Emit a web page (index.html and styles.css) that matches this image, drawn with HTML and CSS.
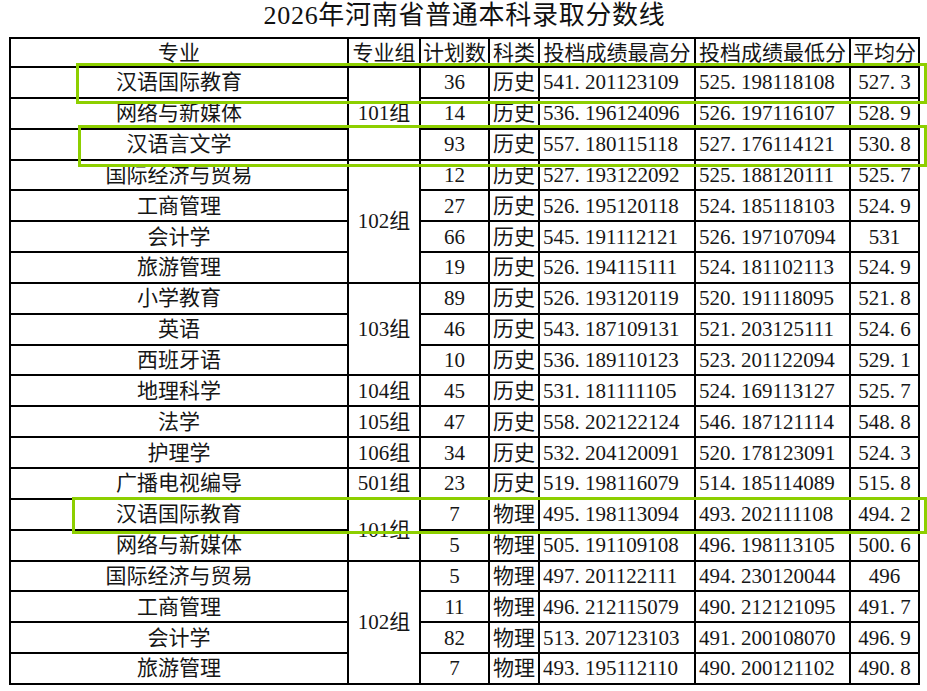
FILE: index.html
```html
<!DOCTYPE html>
<html lang="zh-CN">
<head>
<meta charset="utf-8">
<title>2026年河南省普通本科录取分数线</title>
<link rel="stylesheet" href="styles.css">
</head>
<body>
<div class="page">
  <h1 class="title">2026年河南省普通本科录取分数线</h1>
  <table class="scores">
    <colgroup>
      <col class="c-major">
      <col class="c-group">
      <col class="c-plan">
      <col class="c-type">
      <col class="c-high">
      <col class="c-low">
      <col class="c-avg">
    </colgroup>
    <thead>
      <tr class="head">
        <th>专业</th><th>专业组</th><th>计划数</th><th>科类</th><th>投档成绩最高分</th><th>投档成绩最低分</th><th>平均分</th>
      </tr>
    </thead>
    <tbody>
      <tr><td>汉语国际教育</td><td class="grp" rowspan="3">101组</td><td>36</td><td>历史</td><td class="sc">541<i>.</i>201123109</td><td class="sc">525<i>.</i>198118108</td><td>527<i>.</i>3</td></tr>
      <tr><td>网络与新媒体</td><td>14</td><td>历史</td><td class="sc">536<i>.</i>196124096</td><td class="sc">526<i>.</i>197116107</td><td>528<i>.</i>9</td></tr>
      <tr><td>汉语言文学</td><td>93</td><td>历史</td><td class="sc">557<i>.</i>180115118</td><td class="sc">527<i>.</i>176114121</td><td>530<i>.</i>8</td></tr>
      <tr><td>国际经济与贸易</td><td class="grp" rowspan="4">102组</td><td>12</td><td>历史</td><td class="sc">527<i>.</i>193122092</td><td class="sc">525<i>.</i>188120111</td><td>525<i>.</i>7</td></tr>
      <tr><td>工商管理</td><td>27</td><td>历史</td><td class="sc">526<i>.</i>195120118</td><td class="sc">524<i>.</i>185118103</td><td>524<i>.</i>9</td></tr>
      <tr><td>会计学</td><td>66</td><td>历史</td><td class="sc">545<i>.</i>191112121</td><td class="sc">526<i>.</i>197107094</td><td>531</td></tr>
      <tr><td>旅游管理</td><td>19</td><td>历史</td><td class="sc">526<i>.</i>194115111</td><td class="sc">524<i>.</i>181102113</td><td>524<i>.</i>9</td></tr>
      <tr><td>小学教育</td><td class="grp" rowspan="3">103组</td><td>89</td><td>历史</td><td class="sc">526<i>.</i>193120119</td><td class="sc">520<i>.</i>191118095</td><td>521<i>.</i>8</td></tr>
      <tr><td>英语</td><td>46</td><td>历史</td><td class="sc">543<i>.</i>187109131</td><td class="sc">521<i>.</i>203125111</td><td>524<i>.</i>6</td></tr>
      <tr><td>西班牙语</td><td>10</td><td>历史</td><td class="sc">536<i>.</i>189110123</td><td class="sc">523<i>.</i>201122094</td><td>529<i>.</i>1</td></tr>
      <tr><td>地理科学</td><td class="grp">104组</td><td>45</td><td>历史</td><td class="sc">531<i>.</i>181111105</td><td class="sc">524<i>.</i>169113127</td><td>525<i>.</i>7</td></tr>
      <tr><td>法学</td><td class="grp">105组</td><td>47</td><td>历史</td><td class="sc">558<i>.</i>202122124</td><td class="sc">546<i>.</i>187121114</td><td>548<i>.</i>8</td></tr>
      <tr><td>护理学</td><td class="grp">106组</td><td>34</td><td>历史</td><td class="sc">532<i>.</i>204120091</td><td class="sc">520<i>.</i>178123091</td><td>524<i>.</i>3</td></tr>
      <tr><td>广播电视编导</td><td class="grp">501组</td><td>23</td><td>历史</td><td class="sc">519<i>.</i>198116079</td><td class="sc">514<i>.</i>185114089</td><td>515<i>.</i>8</td></tr>
      <tr><td>汉语国际教育</td><td class="grp" rowspan="2">101组</td><td>7</td><td>物理</td><td class="sc">495<i>.</i>198113094</td><td class="sc">493<i>.</i>202111108</td><td>494<i>.</i>2</td></tr>
      <tr><td>网络与新媒体</td><td>5</td><td>物理</td><td class="sc">505<i>.</i>191109108</td><td class="sc">496<i>.</i>198113105</td><td>500<i>.</i>6</td></tr>
      <tr><td>国际经济与贸易</td><td class="grp" rowspan="4">102组</td><td>5</td><td>物理</td><td class="sc">497<i>.</i>201122111</td><td class="sc">494<i>.</i>230120044</td><td>496</td></tr>
      <tr><td>工商管理</td><td>11</td><td>物理</td><td class="sc">496<i>.</i>212115079</td><td class="sc">490<i>.</i>212121095</td><td>491<i>.</i>7</td></tr>
      <tr><td>会计学</td><td>82</td><td>物理</td><td class="sc">513<i>.</i>207123103</td><td class="sc">491<i>.</i>200108070</td><td>496<i>.</i>9</td></tr>
      <tr><td>旅游管理</td><td>7</td><td>物理</td><td class="sc">493<i>.</i>195112110</td><td class="sc">490<i>.</i>200121102</td><td>490<i>.</i>8</td></tr>
    </tbody>
  </table>
  <div class="mark mark-1"></div>
  <div class="mark mark-2"></div>
  <div class="mark mark-3"></div>
</div>
</body>
</html>
```

FILE: styles.css
```css
html, body {
  margin: 0;
  padding: 0;
  background: #ffffff;
}

.page {
  position: relative;
  width: 927px;
  height: 691px;
  overflow: hidden;
  font-family: "Liberation Serif", "Noto Sans CJK SC", serif;
  color: #161616;
}

.title {
  margin: 0;
  width: 929px;
  height: 37px;
  line-height: 32px;
  font-size: 26px;
  font-weight: normal;
  letter-spacing: 0.7px;
  text-align: center;
  color: #111;
}

.scores {
  margin-left: 9px;
  width: 911px;
  border-collapse: collapse;
  table-layout: fixed;
  font-size: 21px;
}

.c-major { width: 338px; }
.c-group { width: 72px; }
.c-plan  { width: 69px; }
.c-type  { width: 50px; }
.c-high  { width: 156px; }
.c-low   { width: 155px; }
.c-avg   { width: 69px; }

.scores th,
.scores td {
  border: 2px solid #000;
  padding: 0;
  text-align: center;
  vertical-align: middle;
  font-weight: normal;
  white-space: nowrap;
  overflow: hidden;
  line-height: 24px;
}

/* the decimal point takes a half-em cell, as in the source font */
.scores td i {
  font-style: normal;
  display: inline-block;
  width: 0.5em;
  text-align: left;
}

.scores tr.head {
  height: 29px;
}

.scores tbody tr {
  height: 30.85px;
}

.scores td.sc {
  text-align: left;
  padding-left: 3px;
}

.mark {
  position: absolute;
  border: 3px solid #8dcf00;
  box-sizing: border-box;
  pointer-events: none;
}

.mark-1 {
  left: 76px;
  top: 63px;
  width: 851px;
  height: 41px;
}

.mark-2 {
  left: 78px;
  top: 125px;
  width: 849px;
  height: 42px;
}

.mark-3 {
  left: 72px;
  top: 497px;
  width: 855px;
  height: 37px;
}
```
